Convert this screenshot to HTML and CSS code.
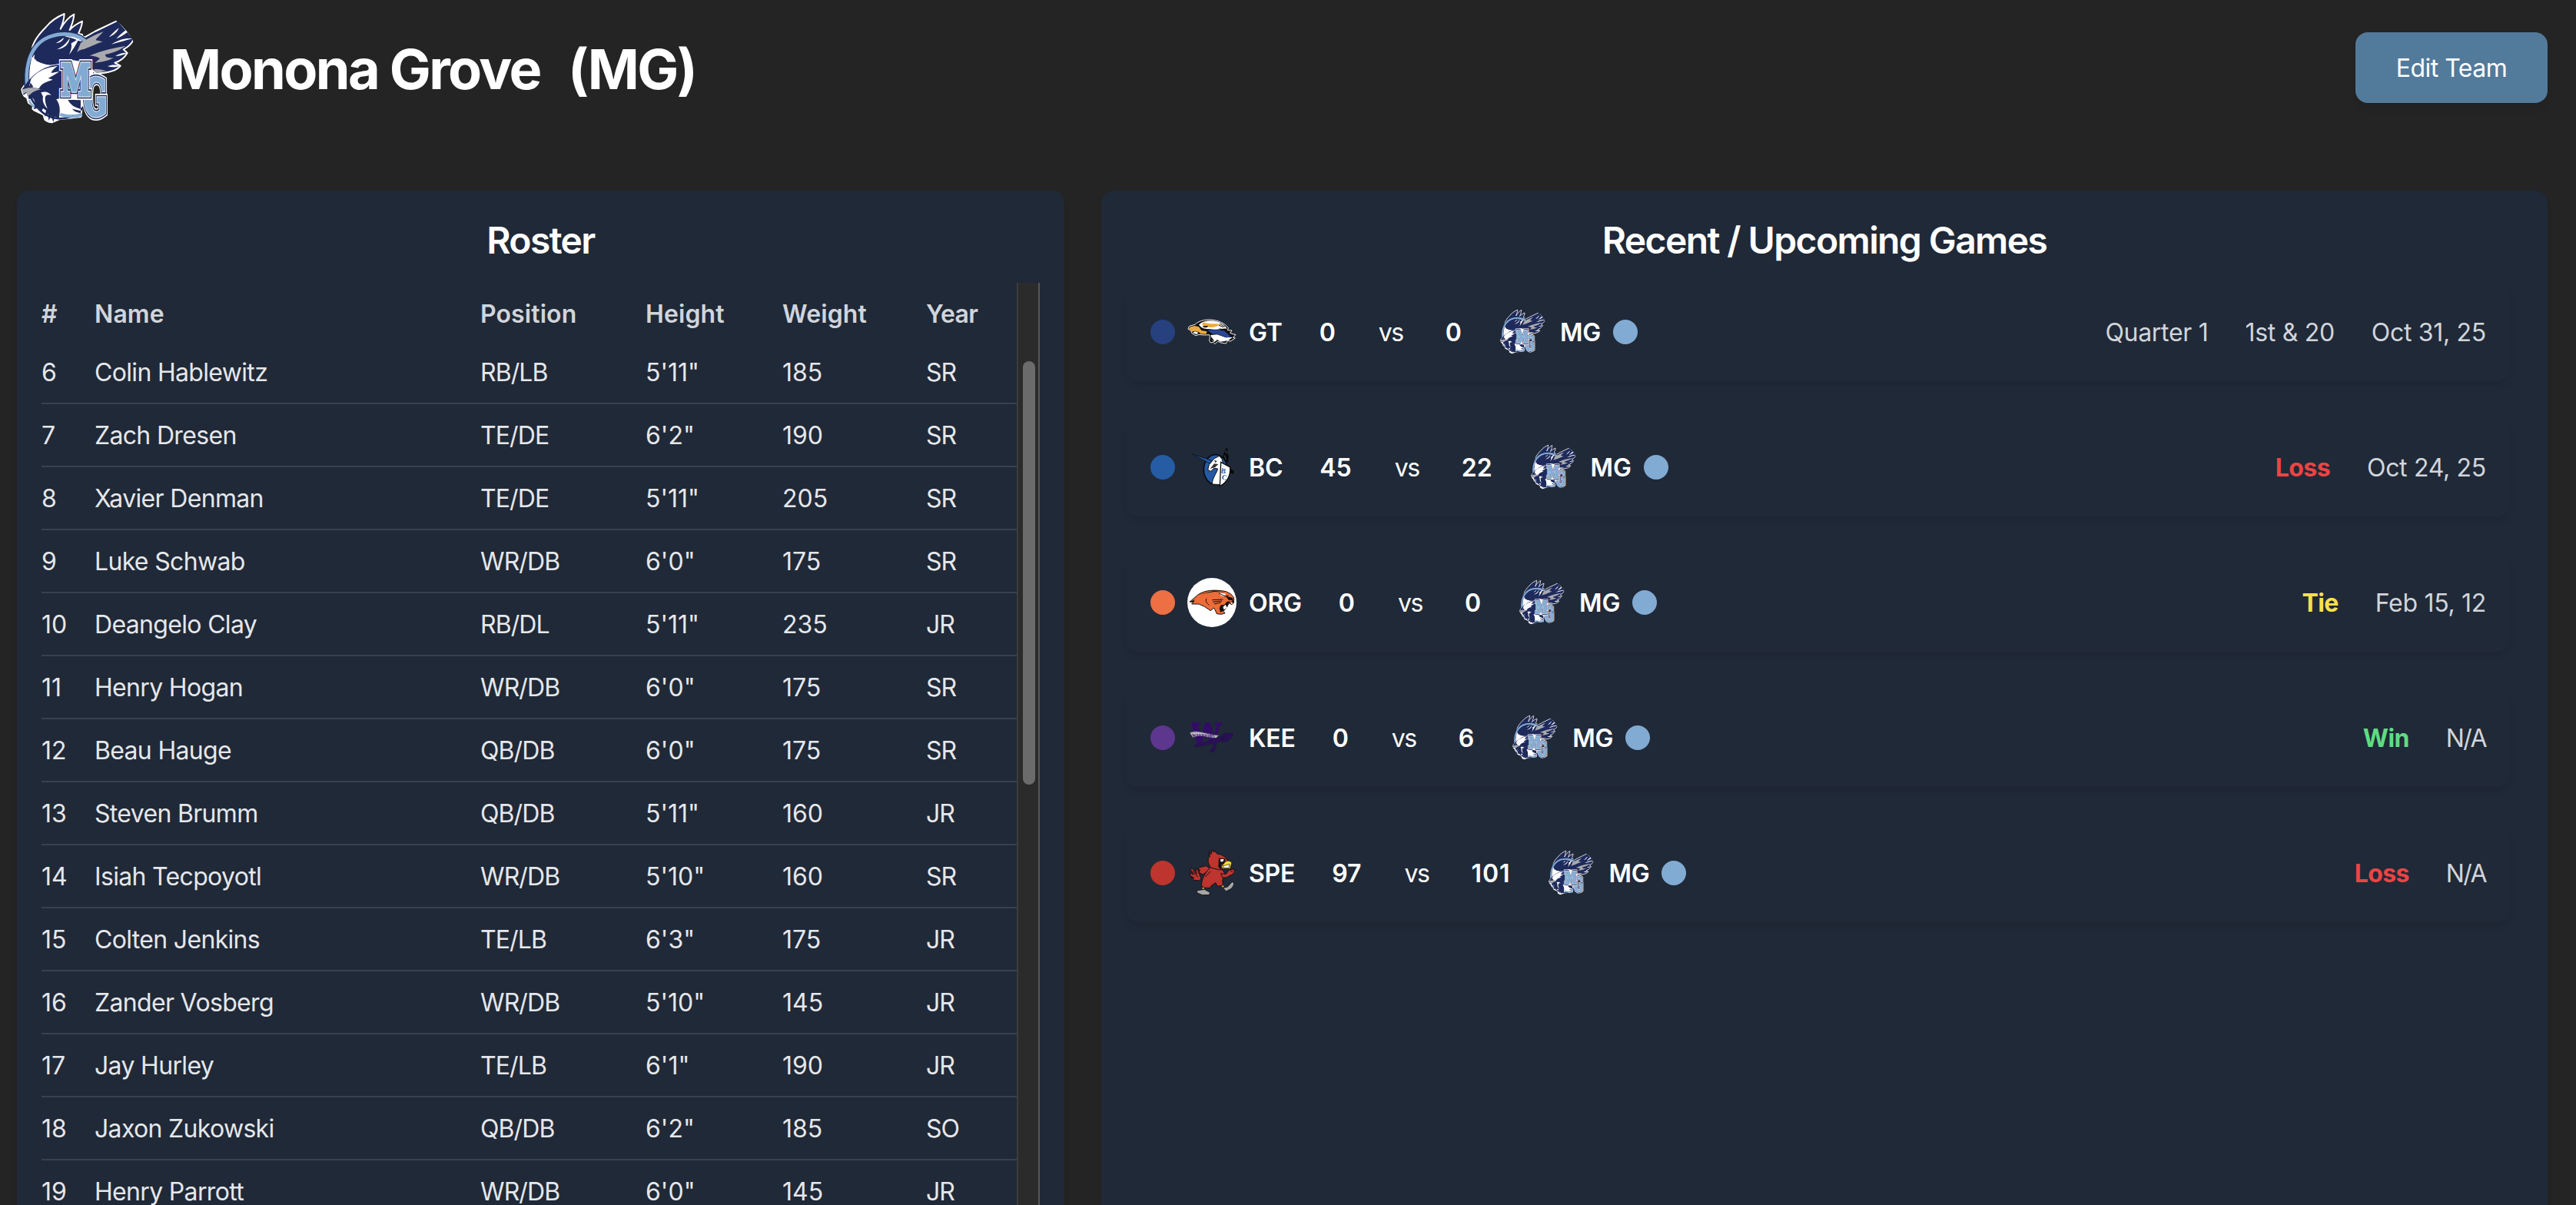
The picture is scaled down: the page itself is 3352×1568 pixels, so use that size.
FILE: index.html
```html
<!DOCTYPE html>
<html lang="en">
<head>
<meta charset="utf-8">
<title>Monona Grove (MG)</title>
<link rel="stylesheet" href="styles.css">
</head>
<body>
<svg class="defs" aria-hidden="true">
  <symbol id="logo-mg" viewBox="36 15 480 480">
    <!-- circular badge -->
    <path d="M90 190C78 225 66 265 72 310L56 334L60 356L76 366L82 386L100 398L98 412L140 432L148 458L172 462L200 450L285 440L300 300L290 120L200 108Z" fill="#fff" stroke="#fff" stroke-width="8" stroke-linejoin="round"/>
    <ellipse cx="205" cy="278" rx="133" ry="170" fill="#fff" stroke="#1e2a5b" stroke-width="8"/>
    <!-- raised back wing and right wing -->
    <path d="M95 185C93 150 130 110 150 90C170 65 195 50 221 39C220 60 214 80 206 98C222 70 238 52 259 41C258 62 250 84 242 102C256 86 272 77 291 68C290 88 282 104 276 116L300 131L340 108L430 65L480 122L491 140C483 158 468 170 452 178L467 192C455 212 438 224 418 230L440 242C428 258 400 270 345 272L300 230L250 222L160 245L110 225Z" fill="#1f2a5c" stroke="#fff" stroke-width="6" stroke-linejoin="round"/>
    <path d="M75 320C70 260 82 205 108 170C135 133 180 118 222 118C255 118 282 128 302 144" fill="none" stroke="#1e2a5b" stroke-width="21"/>
    <path d="M76 320C70 260 82 205 108 170C135 133 180 118 222 118C255 118 282 128 302 144" fill="none" stroke="#82abd3" stroke-width="14"/>
    <path d="M103 212C112 165 160 130 215 128C250 127 278 138 292 152C280 175 262 205 235 225C200 240 130 245 103 212Z" fill="#1f2a5c"/>
    <path d="M192 178C214 168 230 154 243 132C238 160 222 174 192 178ZM248 154C262 146 272 140 280 134C270 150 262 170 240 198C250 176 250 166 248 154ZM188 154C202 146 210 138 220 132C214 146 204 152 188 154ZM222 128C250 124 276 134 290 146C270 146 264 132 222 128Z" fill="#fff"/>
    <path d="M285 152C310 138 345 118 374 108C358 126 346 134 344 142L371 148C340 158 318 170 300 176C285 178 275 184 270 190C276 176 280 164 285 152Z" fill="#a9aaae"/>
    <path d="M320 202C370 180 420 172 461 164C440 178 420 190 380 198L385 208C400 212 408 212 416 211C390 222 370 228 340 230L360 214C350 206 335 204 320 202ZM336 256C350 252 370 258 388 262L345 270Z" fill="#a9aaae"/>
    <path d="M395 130C412 112 425 100 434 94C428 110 415 122 395 130ZM424 136C440 118 456 106 464 102L468 110C452 122 440 130 424 136ZM405 158C436 138 464 132 488 136C462 142 436 150 405 158ZM420 204C438 194 454 190 466 192C450 200 436 204 420 204ZM390 244C406 236 424 238 438 242C422 248 406 248 390 244Z" fill="#fff"/>
    <!-- eagle head and claws -->
    <path d="M88 240C84 270 88 290 92 300C110 270 140 250 195 240C150 240 110 235 95 205Z" fill="#fff"/>
    <path d="M200 238C140 240 95 280 72 312L56 334L62 356L78 344L82 372L98 368C110 380 108 400 100 412L122 406L130 424L138 408L150 416L144 440L158 430L160 456L170 436L178 462L184 440L200 448C204 420 208 400 190 372L215 370V240Z" fill="#1f2a5c"/>
    <path d="M92 292C115 262 150 248 196 242C180 252 172 262 170 270L202 264C185 276 172 284 158 290L176 296C155 304 135 306 122 330L100 328L84 318Z" fill="#fff"/>
    <path d="M84 308C92 310 98 318 100 326L88 322Z" fill="#1f2a5c"/>
    <path d="M56 334L82 328C104 326 118 330 130 334C112 338 100 342 90 352L76 362L74 344L60 352Z" fill="#a9aaae"/>
    <path d="M130 346C150 340 160 346 170 356C156 352 148 356 146 366C146 386 150 396 156 410C142 396 134 380 138 362ZM190 372L215 370L285 372V432C250 434 220 430 205 424C210 400 204 386 190 372Z" fill="#fff"/>
    <path d="M235 374L285 376V410C262 404 245 395 235 374ZM252 410L285 418V426C268 424 258 418 252 410Z" fill="#1f2a5c"/>
    <path d="M205 432C230 440 262 442 290 432" fill="none" stroke="#82abd3" stroke-width="13"/>
    <path d="M84 376C88 388 94 396 104 402" fill="none" stroke="#82abd3" stroke-width="8"/>
    <!-- monogram -->
    <g font-family="'DejaVu Serif'" font-weight="700" stroke-linejoin="miter" stroke-miterlimit="3">
      <g transform="translate(296 436)">
        <text textLength="92" lengthAdjust="spacingAndGlyphs" font-size="194" fill="#fff" stroke="#fff" stroke-width="36">G</text>
        <text textLength="92" lengthAdjust="spacingAndGlyphs" font-size="194" fill="#1f2a5c" stroke="#1f2a5c" stroke-width="26">G</text>
        <text textLength="92" lengthAdjust="spacingAndGlyphs" font-size="194" fill="#fff" stroke="#e3ebf5" stroke-width="16">G</text>
        <text textLength="92" lengthAdjust="spacingAndGlyphs" font-size="194" fill="#82abd3" stroke="#82abd3" stroke-width="9">G</text>
      </g>
      <g transform="translate(208 358)">
        <text textLength="116" lengthAdjust="spacingAndGlyphs" font-size="168" fill="#fff" stroke="#fff" stroke-width="36">M</text>
        <text textLength="116" lengthAdjust="spacingAndGlyphs" font-size="168" fill="#1f2a5c" stroke="#1f2a5c" stroke-width="26">M</text>
        <text textLength="116" lengthAdjust="spacingAndGlyphs" font-size="168" fill="#fff" stroke="#e3ebf5" stroke-width="16">M</text>
        <text textLength="116" lengthAdjust="spacingAndGlyphs" font-size="168" fill="#82abd3" stroke="#82abd3" stroke-width="9">M</text>
      </g>
    </g>
  </symbol>
</svg>

<header class="page-header">
  <div class="team">
    <svg class="team-logo"><use href="#logo-mg"/></svg>
    <h1 class="team-name"><span>Monona Grove</span><span>(MG)</span></h1>
  </div>
  <button class="edit-button" type="button">Edit Team</button>
</header>

<main class="panels">
  <section class="panel roster">
    <h2 class="panel-title">Roster</h2>
    <div class="roster-scroll">
      <table class="roster-table">
        <colgroup><col class="c-num"><col class="c-name"><col class="c-pos"><col class="c-height"><col class="c-weight"><col class="c-year"></colgroup>
        <thead><tr><th>#</th><th>Name</th><th>Position</th><th>Height</th><th>Weight</th><th>Year</th></tr></thead>
        <tbody>
          <tr><td>6</td><td>Colin Hablewitz</td><td>RB/LB</td><td>5'11"</td><td>185</td><td>SR</td></tr>
          <tr><td>7</td><td>Zach Dresen</td><td>TE/DE</td><td>6'2"</td><td>190</td><td>SR</td></tr>
          <tr><td>8</td><td>Xavier Denman</td><td>TE/DE</td><td>5'11"</td><td>205</td><td>SR</td></tr>
          <tr><td>9</td><td>Luke Schwab</td><td>WR/DB</td><td>6'0"</td><td>175</td><td>SR</td></tr>
          <tr><td>10</td><td>Deangelo Clay</td><td>RB/DL</td><td>5'11"</td><td>235</td><td>JR</td></tr>
          <tr><td>11</td><td>Henry Hogan</td><td>WR/DB</td><td>6'0"</td><td>175</td><td>SR</td></tr>
          <tr><td>12</td><td>Beau Hauge</td><td>QB/DB</td><td>6'0"</td><td>175</td><td>SR</td></tr>
          <tr><td>13</td><td>Steven Brumm</td><td>QB/DB</td><td>5'11"</td><td>160</td><td>JR</td></tr>
          <tr><td>14</td><td>Isiah Tecpoyotl</td><td>WR/DB</td><td>5'10"</td><td>160</td><td>SR</td></tr>
          <tr><td>15</td><td>Colten Jenkins</td><td>TE/LB</td><td>6'3"</td><td>175</td><td>JR</td></tr>
          <tr><td>16</td><td>Zander Vosberg</td><td>WR/DB</td><td>5'10"</td><td>145</td><td>JR</td></tr>
          <tr><td>17</td><td>Jay Hurley</td><td>TE/LB</td><td>6'1"</td><td>190</td><td>JR</td></tr>
          <tr><td>18</td><td>Jaxon Zukowski</td><td>QB/DB</td><td>6'2"</td><td>185</td><td>SO</td></tr>
          <tr><td>19</td><td>Henry Parrott</td><td>WR/DB</td><td>6'0"</td><td>145</td><td>JR</td></tr>
        </tbody>
      </table>
      <div class="scroll-track"><div class="scroll-thumb"></div></div>
    </div>
  </section>

  <section class="panel games">
    <h2 class="panel-title">Recent / Upcoming Games</h2>
    <div class="game-list">
      <article class="game">
        <div class="side">
          <span class="dot dot-gt"></span>
          <svg class="logo" viewBox="195 60 192 192">
            <path d="M197 144L203 133L225 127C238 113 262 107 285 108C318 110 344 124 355 140L352 149L369 150L362 160L372 164L384 166L374 178L382 180L364 192L352 190L346 201L326 198L314 192L303 203L296 196L286 198L281 190L283 176L281 167L262 168L240 166L228 170L214 162L208 150Z" fill="#111" stroke="#f1f1f1" stroke-width="3" stroke-linejoin="round"/>
            <path d="M240 128C254 112 286 108 310 115C332 121 346 134 350 144C334 140 320 148 300 146C280 144 262 146 250 138Z" fill="#fff"/>
            <path d="M200 144L207 136L224 132L240 136L250 150L272 154L268 164L246 163L240 156L222 152L212 156L208 148ZM258 118C278 128 300 120 326 126L308 134C290 142 270 136 252 128Z" fill="#edaa3c"/>
            <path d="M216 160L224 154L238 158L232 165ZM286 168L312 166L345 178L372 176L356 188L340 192L324 194L312 186L300 196L290 186Z" fill="#fff"/>
            <path d="M272 144C296 154 320 142 340 152L364 174L350 178C330 174 320 162 304 164C292 166 284 158 272 144Z" fill="#2a4697"/>
            <path d="M255 133L278 132L270 139L258 138ZM318 142L340 146L330 152ZM284 170L302 192L288 186Z" fill="#111"/>
            <path d="M318 130L336 137M322 124L342 136" stroke="#111" stroke-width="3"/>
          </svg>
          <span class="code">GT</span>
        </div>
        <span class="score">0</span><span class="vs">vs</span><span class="score">0</span>
        <div class="side"><svg class="logo"><use href="#logo-mg"/></svg><span class="code">MG</span><span class="dot dot-mg"></span></div>
        <div class="info"><span>Quarter 1</span><span>1st &amp; 20</span><span>Oct 31, 25</span></div>
      </article>

      <article class="game">
        <div class="side">
          <span class="dot dot-bc"></span>
          <svg class="logo" viewBox="195 588 192 192">
            <path d="M345 610L354 612L350 626L357 642L355 664L342 670L332 650L336 632ZM358 688L378 698L376 711L360 706Z" fill="#0a0b0e"/>
            <path d="M343 618L348 630M340 638L346 655" stroke="#687078" stroke-width="2"/>
            <ellipse cx="305" cy="693" rx="46" ry="58" fill="#2459a5" stroke="#0a0b0e" stroke-width="5"/>
            <path d="M211 631L290 658L284 670Z" fill="#2459a5" stroke="#0d1830" stroke-width="3"/>
            <path d="M320 640L330 652L334 666L322 752L292 750C292 728 308 710 314 690L300 688L286 700L275 694L280 674L300 650Z" fill="#fff" stroke="#111" stroke-width="3"/>
            <path d="M284 690L300 670L316 672L304 684ZM300 656L312 660L304 666Z" fill="#333"/>
            <path d="M326 664L362 684C364 716 352 742 322 758Z" fill="#fff" stroke="#0a0b0e" stroke-width="4"/>
            <text x="325" y="706" class="shield" transform="rotate(12 325 706)">B</text>
            <text x="328" y="731" class="shield" transform="rotate(12 328 731)">C</text>
          </svg>
          <span class="code">BC</span>
        </div>
        <span class="score">45</span><span class="vs">vs</span><span class="score">22</span>
        <div class="side"><svg class="logo"><use href="#logo-mg"/></svg><span class="code">MG</span><span class="dot dot-mg"></span></div>
        <div class="info"><span class="loss">Loss</span><span>Oct 24, 25</span></div>
      </article>

      <article class="game">
        <div class="side">
          <span class="dot dot-org"></span>
          <svg class="logo logo-org" viewBox="195 66 192 192">
            <path d="M204 160L236 132C262 114 300 110 346 119L364 128L377 143L376 164L368 170L358 164L350 178L336 196L342 204L328 208L310 206L304 192L298 183L286 194L262 178L240 168L212 168L222 156Z" fill="#ec6c3a" stroke="#111" stroke-width="3" stroke-linejoin="round"/>
            <path d="M322 124L346 128L338 138L324 134Z" fill="#fff"/>
            <path d="M344 136L372 144L374 154L356 152ZM374 152L376 164L366 158L350 158L340 170L326 172L320 184L324 200L336 194L350 180L356 166ZM236 132L300 120L344 122L300 116Z" fill="#111"/>
            <path d="M292 152L334 150M294 160L330 156M300 168L326 162M270 146C264 156 270 164 280 172M318 126L344 138L356 134" fill="none" stroke="#111" stroke-width="3"/>
            <path d="M344 170L350 182L338 190L334 180ZM368 160L372 168L366 166Z" fill="#fff"/>
            <path d="M206 160L224 150L216 162Z" fill="#111"/>
          </svg>
          <span class="code">ORG</span>
        </div>
        <span class="score">0</span><span class="vs">vs</span><span class="score">0</span>
        <div class="side"><svg class="logo"><use href="#logo-mg"/></svg><span class="code">MG</span><span class="dot dot-mg"></span></div>
        <div class="info"><span class="tie">Tie</span><span>Feb 15, 12</span></div>
      </article>

      <article class="game">
        <div class="side">
          <span class="dot dot-kee"></span>
          <svg class="logo" viewBox="195 594 192 192">
            <text x="207" y="710" class="letter" textLength="121" lengthAdjust="spacingAndGlyphs">W</text>
            <path d="M222 718L312 694L340 672L372 674L374 682L352 704L320 704L310 710L300 744L282 746L302 712L226 726Z" fill="#2c0f5a" stroke="#191a38" stroke-width="2"/>
            <path d="M322 692L358 680M330 698L356 696M340 676L334 702" stroke="#171b35" stroke-width="2"/>
            <path d="M204 670C240 656 270 678 318 680L308 691C270 692 250 676 216 690Z" fill="#b9b4c4" stroke="#30214e" stroke-width="2"/>
            <text x="213" y="686" class="ribbon-text" textLength="88" lengthAdjust="spacingAndGlyphs" transform="rotate(2 213 686)">WARRIORS</text>
          </svg>
          <span class="code">KEE</span>
        </div>
        <span class="score">0</span><span class="vs">vs</span><span class="score">6</span>
        <div class="side"><svg class="logo"><use href="#logo-mg"/></svg><span class="code">MG</span><span class="dot dot-mg"></span></div>
        <div class="info"><span class="win">Win</span><span class="na">N/A</span></div>
      </article>

      <article class="game">
        <div class="side">
          <span class="dot dot-spe"></span>
          <svg class="logo" viewBox="195 1122 192 192">
            <g stroke="#181212" stroke-width="3" stroke-linejoin="round">
              <path d="M248 1238L236 1206L226 1202L232 1222L214 1200L206 1202L220 1224L204 1218L206 1228L222 1238L208 1236L222 1246L244 1248Z" fill="#be342f"/>
              <path d="M290 1204L268 1190L236 1198L244 1206L240 1216L256 1224L270 1214Z" fill="#be342f"/>
              <path d="M262 1266L256 1280M326 1262L336 1272" stroke="#e3cf3c" stroke-width="6"/>
              <path d="M232 1286L262 1282L284 1294L280 1304L254 1304L234 1296Z" fill="#a6a6a8"/>
              <path d="M334 1276L352 1272L370 1252L378 1260L372 1276L346 1290Z" fill="#a6a6a8"/>
              <path d="M284 1196C262 1222 252 1236 250 1270L264 1276L284 1276L290 1266L306 1256L312 1270L334 1266L332 1246L342 1224C340 1212 332 1206 322 1200Z" fill="#be342f"/>
              <path d="M326 1220L346 1222L358 1206L376 1202L380 1214L370 1224L346 1236L332 1236Z" fill="#be342f"/>
              <path d="M288 1198C274 1182 272 1160 284 1152L274 1146L286 1146L278 1134L290 1142L290 1129L300 1136L300 1130L312 1144C330 1144 344 1156 352 1168L340 1196L322 1206L306 1202Z" fill="#be342f"/>
            </g>
            <path d="M318 1160L344 1162L340 1178L328 1186L326 1206L316 1194Z" fill="#161111"/>
            <path d="M324 1164L338 1164L334 1174L325 1174Z" fill="#fff"/>
            <path d="M340 1178C346 1168 360 1166 369 1178L362 1202L334 1202L328 1192Z" fill="#eed83e" stroke="#181212" stroke-width="3"/>
            <path d="M335 1190L360 1184L357 1198L338 1198Z" fill="#fff" stroke="#181212" stroke-width="2"/>
            <path d="M286 1212C276 1220 274 1226 264 1232M362 1208L372 1214M216 1210L236 1234" fill="none" stroke="#181212" stroke-width="3"/>
          </svg>
          <span class="code">SPE</span>
        </div>
        <span class="score">97</span><span class="vs">vs</span><span class="score wide">101</span>
        <div class="side"><svg class="logo"><use href="#logo-mg"/></svg><span class="code">MG</span><span class="dot dot-mg"></span></div>
        <div class="info"><span class="loss">Loss</span><span class="na">N/A</span></div>
      </article>
    </div>
  </section>
</main>
</body>
</html>
```
FILE: styles.css
```css
* { box-sizing: border-box; margin: 0; padding: 0; }

body {
  height: 100vh;
  overflow: hidden;
  display: flex;
  flex-direction: column;
  background: #242424;
  color: #fff;
  font-family: Inter, "Liberation Sans", sans-serif;
  font-size: 32px;
  line-height: 48px;
}

.defs { display: none; }

/* Header */
.page-header {
  flex: none;
  height: 248px;
  padding: 10px 37px 0 22px;
  display: flex;
  justify-content: space-between;
  align-items: flex-start;
}
.team { display: flex; align-items: center; gap: 39px; }
.team-logo { width: 160px; height: 160px; border-radius: 50%; }
.team-name {
  display: flex;
  gap: 36px;
  font-size: 72px;
  line-height: 80px;
  font-weight: 700;
  letter-spacing: -2.6px;
  white-space: nowrap;
}
.edit-button {
  width: 250px;
  height: 92px;
  margin-top: 32px;
  padding-top: 2px;
  border: 0;
  border-radius: 16px;
  background: #527a9b;
  color: #fff;
  font: inherit;
  letter-spacing: -0.5px;
  box-shadow: 0 8px 12px -2px rgba(0, 0, 0, 0.06), 0 4px 8px -4px rgba(0, 0, 0, 0.06);
}

/* Panels */
.panels {
  flex: 1;
  display: grid;
  grid-template-columns: 1363px 1fr;
  gap: 48px;
  padding: 0 37px 0 22px;
  min-height: 0;
}
.panel {
  padding: 32px 32px 0;
  border-radius: 16px 16px 0 0;
  background: #202937;
  box-shadow: 0 8px 12px -2px rgba(0, 0, 0, 0.06), 0 4px 8px -4px rgba(0, 0, 0, 0.06);
  overflow: hidden;
}
.panel-title {
  height: 88px;
  padding-top: 1px;
  font-size: 48px;
  line-height: 64px;
  font-weight: 600;
  letter-spacing: -1.6px;
  text-align: center;
}

/* Roster */
.roster-scroll { display: flex; height: 1240px; }
.roster-table {
  align-self: flex-start;
  width: 1269px;
  table-layout: fixed;
  border-collapse: separate;
  border-spacing: 0;
}
.c-num { width: 69px; }
.c-name { width: 502px; }
.c-pos { width: 215px; }
.c-height { width: 178px; }
.c-weight { width: 187px; }
.c-year { width: 118px; }
.roster-table th {
  height: 76px;
  padding-top: 6px;
  color: #d1d5db;
  font-weight: 600;
  text-align: left;
  letter-spacing: 0.1px;
}
.roster-table td {
  height: 82px;
  padding-top: 2px;
  border-bottom: 2px solid #374151;
  color: #e5e7eb;
  white-space: nowrap;
}
.roster-table td:nth-child(2) { letter-spacing: -0.67px; }
.roster-table td:nth-child(3) { letter-spacing: -0.9px; }
.roster-table th:nth-child(6) { letter-spacing: -0.7px; }
.roster-table td:nth-child(6) { letter-spacing: -1px; }
.scroll-track {
  width: 30px;
  padding: 102px 0 0 6px;
  border-left: 2px solid #3d3d3d;
  border-right: 2px solid #565656;
  background: #2b2b2b;
}
.scroll-thumb { width: 16px; height: 551px; border-radius: 8px; background: #6b6b6b; }

/* Games */
.games { padding-right: 49px; }
.games .panel-title { margin-right: -17px; }
.game-list { display: flex; flex-direction: column; gap: 48px; }
.game {
  height: 128px;
  padding: 0 32px;
  display: flex;
  align-items: center;
  gap: 48px;
  border-radius: 16px;
  background: #202937;
  box-shadow: 0 8px 12px -2px rgba(0, 0, 0, 0.05), 0 4px 8px -4px rgba(0, 0, 0, 0.05);
  white-space: nowrap;
}
.side { display: flex; align-items: center; gap: 16px; }
.dot { width: 32px; height: 32px; border-radius: 50%; }
.dot-mg { background: #82abd3; }
.dot-gt { background: #27417f; }
.dot-bc { background: #255ca4; }
.dot-org { background: #ed7044; }
.dot-kee { background: #5d368e; }
.dot-spe { background: #be342f; }
.logo { width: 64px; height: 64px; border-radius: 50%; }
.logo-org { background: #fff; }
.shield { font: 700 28px "Liberation Serif", serif; fill: #2459a5; }
.letter { font: 700 105px "DejaVu Serif", serif; fill: #330c68; stroke: #330c68; stroke-width: 4px; }
.ribbon-text { font: 700 17px "Liberation Serif", serif; fill: #330c68; }
.code, .score, .vs, .info { padding-top: 2px; }
.code, .score { font-weight: 600; }
.code { letter-spacing: -0.2px; }
.wide { letter-spacing: 0.9px; }
.vs { width: 31px; margin: 0 8px; letter-spacing: -1.5px; }
.info {
  margin-left: auto;
  display: flex;
  gap: 48px;
  color: #d1d5db;
  letter-spacing: -0.3px;
}
.info span:last-child { margin-right: -1px; }
.info .na { letter-spacing: -1.6px; }
.loss, .tie, .win { font-weight: 700; letter-spacing: -0.6px; }
.loss { color: #ec4444; }
.tie { color: #f9e04f; }
.win { color: #5fdc84; }
```
